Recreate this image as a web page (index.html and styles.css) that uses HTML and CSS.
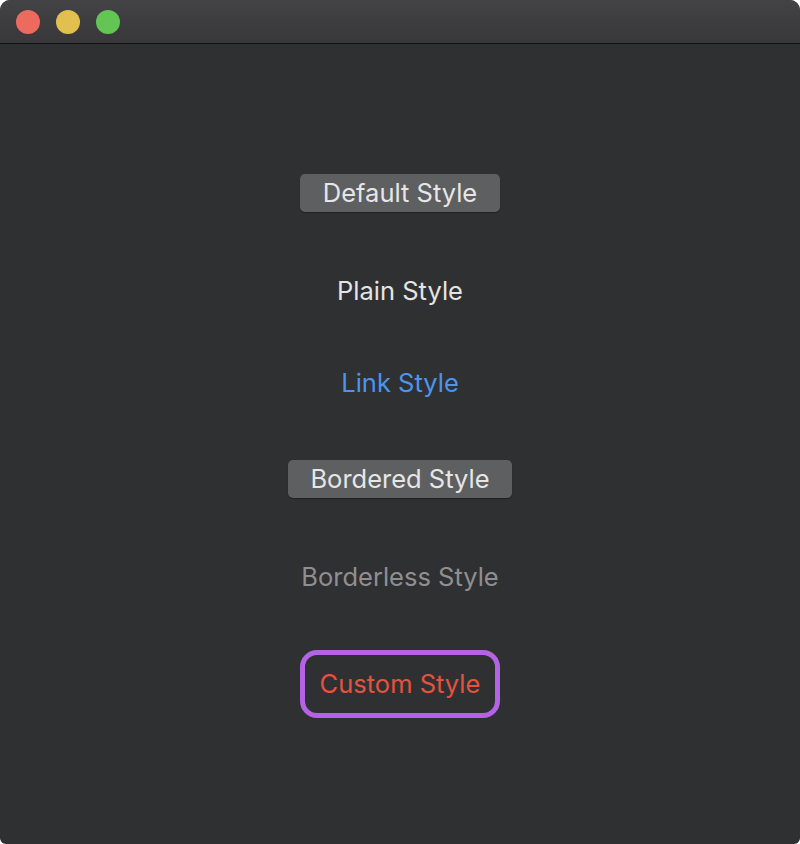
FILE: index.html
```html
<!DOCTYPE html>
<html>
<head>
<meta charset="utf-8">
<link rel="stylesheet" href="styles.css">
</head>
<body>
<div class="window">
  <div class="titlebar">
    <span class="light red"></span>
    <span class="light yellow"></span>
    <span class="light green"></span>
  </div>
  <div class="content">
    <button class="btn default">Default Style</button>
    <button class="btn plain">Plain Style</button>
    <button class="btn link">Link Style</button>
    <button class="btn bordered">Bordered Style</button>
    <button class="btn borderless">Borderless Style</button>
    <button class="btn custom">Custom Style</button>
  </div>
</div>
</body>
</html>
```

FILE: styles.css
```css
html, body {
  margin: 0;
  padding: 0;
  background: #ffffff;
}
.window {
  width: 800px;
  height: 844px;
  background: #2f3032;
  border-radius: 10px 10px 6px 6px;
  overflow: hidden;
  display: flex;
  flex-direction: column;
}
.titlebar {
  height: 43px;
  border-bottom: 1px solid #111112;
  background: linear-gradient(#434345, #38383a);
  display: flex;
  align-items: center;
  gap: 16px;
  padding-left: 16px;
  box-sizing: content-box;
}
.light {
  width: 24px;
  height: 24px;
  border-radius: 50%;
}
.red { background: #ec6a5e; }
.yellow { background: #e2c04f; }
.green { background: #62c554; }
.content {
  display: flex;
  flex-direction: column;
  align-items: center;
  font-family: Inter, "Liberation Sans", sans-serif;
}
.btn {
  font-family: inherit;
  font-size: 25.5px;
  line-height: 30px;
  border: none;
  background: none;
  padding: 0;
  color: #e4e4e4;
}
.default, .bordered {
  height: 38px;
  background: #5e5f61;
  border-radius: 5px;
  box-shadow: 0 1px 1px rgba(0,0,0,0.35);
  color: #e6e6e6;
}
.default {
  width: 200px;
  margin-top: 130px;
}
.plain {
  margin-top: 64px;
}
.link {
  margin-top: 62px;
  color: #4d95ec;
}
.bordered {
  width: 224px;
  margin-top: 62px;
}
.borderless {
  margin-top: 64px;
  color: #8f8f91;
}
.custom {
  margin-top: 58px;
  width: 200px;
  height: 68px;
  border: 5px solid #b463e5;
  border-radius: 17px;
  color: #e5523f;
  box-sizing: border-box;
}
```
